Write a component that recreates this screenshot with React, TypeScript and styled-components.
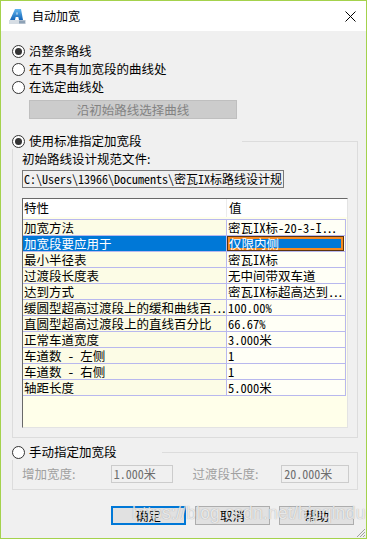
import React from 'react';
import styled, { createGlobalStyle } from 'styled-components';

const cjk = `"Noto Sans Mono CJK SC", "Noto Sans CJK SC", "Liberation Mono", monospace`;
const ui = `"Noto Sans CJK SC", "Noto Sans Mono CJK SC", sans-serif`;

const GlobalStyle = createGlobalStyle`
  html, body {
    margin: 0;
    padding: 0;
    background: #ffffff;
  }
  * {
    box-sizing: border-box;
  }
`;

const Window = styled.div`
  position: relative;
  width: 367px;
  height: 539px;
  border: 1px solid #a4d24c;
  background: #f0f0f0;
  display: flex;
  flex-direction: column;
  font-family: ${ui};
  color: #000;
  overflow: hidden;
`;

const TitleBar = styled.div`
  height: 30px;
  background: #ffffff;
  display: flex;
  align-items: center;
  padding: 0 10px 0 8px;
  flex-shrink: 0;
`;

const TitleText = styled.span`
  margin-left: 6px;
  font-size: 12px;
  line-height: 16px;
  flex: 1;
`;

const Body = styled.div`
  flex: 1;
  display: flex;
  flex-direction: column;
  padding: 11px 9px 0 11px;
`;

const RadioRow = styled.label`
  display: flex;
  align-items: center;
  height: 18px;
  font-size: 12.5px;
  line-height: 18px;
  gap: 4px;
  white-space: nowrap;
`;

const RadioDot = styled.span<{ checked?: boolean }>`
  width: 13px;
  height: 13px;
  border-radius: 50%;
  border: 1px solid #333333;
  background: #ffffff;
  display: flex;
  align-items: center;
  justify-content: center;
  flex-shrink: 0;
  &::after {
    content: '';
    width: 7px;
    height: 7px;
    border-radius: 50%;
    background: ${p => (p.checked ? '#333333' : 'transparent')};
  }
`;

const DisabledButton = styled.div`
  margin: 4px 0 0 17px;
  width: 208px;
  height: 19px;
  background: #cccccc;
  border: 1px solid #bfbfbf;
  color: #838383;
  font-size: 12.5px;
  line-height: 17px;
  text-align: center;
`;

const Group = styled.fieldset<{ top: number }>`
  margin: ${p => p.top}px 0 0 0;
  padding: 0;
  border: 1px solid #dcdcdc;
  min-width: 0;
  width: 346px;
`;

const Legend = styled.legend<{ w: number }>`
  width: ${p => p.w}px;
  padding: 0;
  margin-left: -1px;
  height: 16px;
  display: flex;
  align-items: center;
`;

const GroupInner = styled.div<{ pb: number }>`
  padding: 2px 8px ${p => p.pb}px 9px;
  display: flex;
  flex-direction: column;
`;

const FieldLabel = styled.div<{ disabled?: boolean; w?: number; pl?: number }>`
  font-size: 12.5px;
  line-height: 16px;
  color: ${p => (p.disabled ? '#a0a0a0' : '#000')};
  white-space: nowrap;
  width: ${p => (p.w ? `${p.w}px` : 'auto')};
  padding-left: ${p => p.pl || 0}px;
`;

const PathBox = styled.div`
  margin-top: 3px;
  width: 262px;
  height: 18px;
  border: 1px solid #7a7a7a;
  background: #f0f0f0;
  font-family: ${cjk};
  font-size: 12px;
  line-height: 16px;
  padding-left: 1px;
  white-space: nowrap;
`;

const Table = styled.div`
  margin-top: 10px;
  width: 326px;
  height: 230px;
  border: 1px solid;
  border-color: #696969 #e3e3e3 #e3e3e3 #696969;
  background: #ffffea;
  display: flex;
  flex-direction: column;
  font-family: ${cjk};
  font-size: 12.5px;
`;

const HeaderRow = styled.div`
  height: 18px;
  background: #ffffff;
  display: grid;
  grid-template-columns: 204px 1fr;
  line-height: 18px;
`;

const HeaderCell = styled.div<{ first?: boolean }>`
  padding-left: ${p => (p.first ? 1 : 2)}px;
  border-right: ${p => (p.first ? '1px solid #ececec' : 'none')};
`;

const Rows = styled.div`
  padding-top: 2px;
  width: 323px;
`;

const Row = styled.div`
  display: grid;
  grid-template-columns: 204px 117px;
  height: 16px;
  border-top: 1px solid #b8b8ee;
  border-right: 1px solid #b8b8ee;
  &:last-child {
    height: 17px;
    border-bottom: 1px solid #b8b8ee;
  }
`;

const NameCell = styled.div<{ selected?: boolean }>`
  border-right: 1px solid #b8b8ee;
  padding-left: 1px;
  line-height: 15px;
  white-space: nowrap;
  background: ${p => (p.selected ? '#0078d7' : '#fcfce6')};
  color: ${p => (p.selected ? '#ffffff' : '#000')};
`;

const ValueCell = styled.div<{ selected?: boolean }>`
  padding-left: ${p => (p.selected ? 2 : 1)}px;
  line-height: 15px;
  white-space: nowrap;
  background: ${p => (p.selected ? '#0078d7' : '#fffff6')};
  color: ${p => (p.selected ? '#ffffff' : '#000')};
  box-shadow: ${p => (p.selected ? 'inset 0 0 0 1px #5b3410, inset 0 0 0 3px #f5891f' : 'none')};
`;

const Dots = styled.span`
  letter-spacing: -1.6px;
`;

const InputRow = styled.div`
  display: flex;
  align-items: center;
  height: 19px;
  margin-top: 2px;
`;

const SmallBox = styled.div<{ w: number }>`
  width: ${p => p.w}px;
  height: 18px;
  border: 1px solid #cccccc;
  background: #f0f0f0;
  color: #6d6d6d;
  font-family: ${cjk};
  font-size: 12px;
  line-height: 16px;
  padding-left: 2px;
`;

const ButtonBar = styled.div`
  margin-top: 16px;
  display: flex;
  gap: 9px;
  padding-left: 99px;
`;

const Button = styled.div<{ primary?: boolean }>`
  width: 75px;
  height: 19px;
  background: #e1e1e1;
  border: ${p => (p.primary ? '2px solid #0078d7' : '1px solid #adadad')};
  font-size: 12.5px;
  line-height: ${p => (p.primary ? 15 : 17)}px;
  text-align: center;
`;

const Watermark = styled.div`
  position: absolute;
  left: 131px;
  top: 502px;
  font-family: "Liberation Sans", Arial, sans-serif;
  font-size: 17.5px;
  letter-spacing: 0.2px;
  color: rgba(255, 255, 255, 0.75);
  text-shadow: 0 0 1px rgba(90, 90, 90, 0.55);
  pointer-events: none;
  white-space: nowrap;
`;

const Grip = styled.svg`
  position: absolute;
  right: 0;
  bottom: 0;
`;

const AppIcon = () => (
  <svg width="17" height="15" viewBox="0 0 17 15">
    <defs>
      <linearGradient id="ag" x1="0" y1="0" x2="0" y2="1">
        <stop offset="0" stopColor="#5fb4ee" />
        <stop offset="1" stopColor="#1565b8" />
      </linearGradient>
    </defs>
    <path d="M6 0 L12 0 L14 11 L10 11 L9.3 8 L6.7 8 L6 11 L1 11 Z" fill="url(#ag)" />
    <path d="M7.4 5.5 L8.6 5.5 L8.2 3 L7.8 3 Z" fill="#ffffff" />
    <rect x="0" y="11" width="17" height="4" fill="#d6dde4" />
    <rect x="10" y="11.5" width="6" height="3" fill="#8ea2b6" />
  </svg>
);

const CloseIcon = () => (
  <svg width="11" height="11" viewBox="0 0 11 11">
    <path d="M0.5 0.5 L10.5 10.5 M10.5 0.5 L0.5 10.5" stroke="#000" strokeWidth="1" />
  </svg>
);

// text ending in "..." gets the dots squeezed, like the cut-off cells of the grid
const cellText = (s: string) =>
  s.endsWith('...') ? (
    <>
      {s.slice(0, -3)}
      <Dots>...</Dots>
    </>
  ) : (
    s
  );

const rows: { name: string; value: string; selected?: boolean }[] = [
  { name: '加宽方法', value: '密瓦IX标-20-3-I...' },
  { name: '加宽段要应用于', value: '仅限内侧', selected: true },
  { name: '最小半径表', value: '密瓦IX标' },
  { name: '过渡段长度表', value: '无中间带双车道' },
  { name: '达到方式', value: '密瓦IX标超高达到...' },
  { name: '缓圆型超高过渡段上的缓和曲线百...', value: '100.00%' },
  { name: '直圆型超高过渡段上的直线百分比', value: '66.67%' },
  { name: '正常车道宽度', value: '3.000米' },
  { name: '车道数 - 左侧', value: '1' },
  { name: '车道数 - 右侧', value: '1' },
  { name: '轴距长度', value: '5.000米' },
];

export default function App() {
  return (
    <>
      <GlobalStyle />
      <Window>
        <TitleBar>
          <AppIcon />
          <TitleText>自动加宽</TitleText>
          <CloseIcon />
        </TitleBar>
        <Body>
          <RadioRow>
            <RadioDot checked />
            沿整条路线
          </RadioRow>
          <RadioRow>
            <RadioDot />
            在不具有加宽段的曲线处
          </RadioRow>
          <RadioRow>
            <RadioDot />
            在选定曲线处
          </RadioRow>
          <DisabledButton>沿初始路线选择曲线</DisabledButton>

          <Group top={14}>
            <Legend w={230}>
              <RadioRow>
                <RadioDot checked />
                使用标准指定加宽段
              </RadioRow>
            </Legend>
            <GroupInner pb={9}>
              <FieldLabel>初始路线设计规范文件:</FieldLabel>
              <PathBox>C:\Users\13966\Documents\密瓦IX标路线设计规</PathBox>
              <Table>
                <HeaderRow>
                  <HeaderCell first>特性</HeaderCell>
                  <HeaderCell>值</HeaderCell>
                </HeaderRow>
                <Rows>
                  {rows.map(r => (
                    <Row key={r.name}>
                      <NameCell selected={r.selected}>{cellText(r.name)}</NameCell>
                      <ValueCell selected={r.selected}>{cellText(r.value)}</ValueCell>
                    </Row>
                  ))}
                </Rows>
              </Table>
            </GroupInner>
          </Group>

          <Group top={6}>
            <Legend w={150}>
              <RadioRow>
                <RadioDot />
                手动指定加宽段
              </RadioRow>
            </Legend>
            <GroupInner pb={6}>
              <InputRow>
                <FieldLabel disabled w={89}>增加宽度:</FieldLabel>
                <SmallBox w={62}>1.000米</SmallBox>
                <FieldLabel disabled w={109} pl={20}>过渡段长度:</FieldLabel>
                <SmallBox w={68}>20.000米</SmallBox>
              </InputRow>
            </GroupInner>
          </Group>

          <ButtonBar>
            <Button primary>确定</Button>
            <Button>取消</Button>
            <Button>帮助</Button>
          </ButtonBar>
        </Body>
        <Watermark>https://blog.csdn.net/hjpqinduong</Watermark>
        <Grip width="11" height="11" viewBox="0 0 11 11">
          <path d="M10 2 L2 10 M10 5 L5 10 M10 8 L8 10" stroke="#a0a0a0" strokeWidth="1" />
        </Grip>
      </Window>
    </>
  );
}
